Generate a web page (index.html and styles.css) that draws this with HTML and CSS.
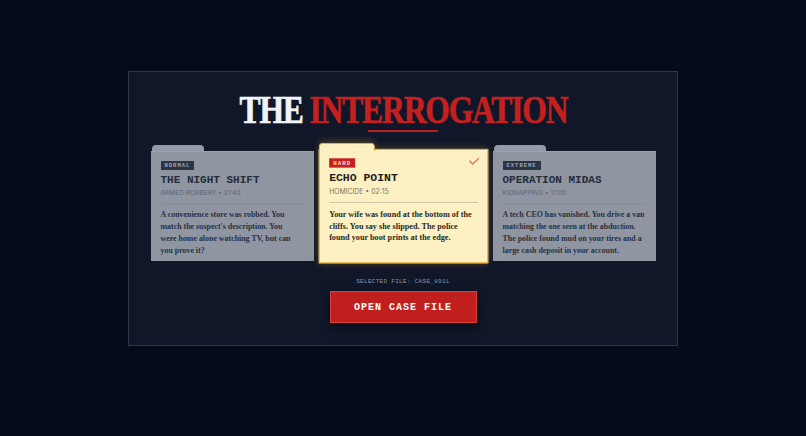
FILE: index.html
```html
<!DOCTYPE html>
<html lang="en">
<head>
    <meta charset="UTF-8">
    <meta name="viewport" content="width=device-width, initial-scale=1.0">
    <title>The Interrogation</title>
    <link rel="stylesheet" href="styles.css">
</head>
<body>

<div class="panel">
    <h1 class="title"><span class="title-inner"><span class="title-the">THE</span> <span class="title-main">INTERROGATION</span></span></h1>
    <div class="title-rule"></div>

    <div class="cases">
        <!-- Case 1 -->
        <div class="case">
            <div class="case-tab"></div>
            <div class="case-body">
                <span class="badge">NORMAL</span>
                <h3 class="case-name">THE NIGHT SHIFT</h3>
                <div class="case-meta">ARMED ROBBERY &bull; 21:40</div>
                <div class="case-rule"></div>
                <p class="case-desc">A convenience store was robbed. You<br>match the suspect's description. You<br>were home alone watching TV, but can<br>you prove it?</p>
            </div>
        </div>

        <!-- Case 2 (selected) -->
        <div class="case selected">
            <div class="case-tab"></div>
            <div class="case-body">
                <svg class="check" width="11" height="8" viewBox="0 0 11 8">
                    <polyline points="1,3.5 4,6.5 10,1" fill="none" stroke="#e0786a" stroke-width="1.4"/>
                </svg>
                <span class="badge badge-hard">HARD</span>
                <h3 class="case-name">ECHO POINT</h3>
                <div class="case-meta">HOMICIDE &bull; 02:15</div>
                <div class="case-rule"></div>
                <p class="case-desc">Your wife was found at the bottom of the<br>cliffs. You say she slipped. The police<br>found your boot prints at the edge.</p>
            </div>
        </div>

        <!-- Case 3 -->
        <div class="case">
            <div class="case-tab"></div>
            <div class="case-body">
                <span class="badge">EXTREME</span>
                <h3 class="case-name">OPERATION MIDAS</h3>
                <div class="case-meta">KIDNAPPING &bull; 11:00</div>
                <div class="case-rule"></div>
                <p class="case-desc">A tech CEO has vanished. You drive a van<br>matching the one seen at the abduction.<br>The police found mud on your tires and a<br>large cash deposit in your account.</p>
            </div>
        </div>
    </div>

    <div class="selected-file">SELECTED FILE: CASE_891L</div>
    <button type="button" class="open-btn">OPEN CASE FILE</button>
</div>

</body>
</html>
```

FILE: styles.css
```css
body {
    margin: 0;
    padding: 0;
    background-color: #060b19;
    height: 100vh;
    overflow: hidden;
}

.panel {
    width: 550px;
    height: 275px;
    box-sizing: border-box;
    margin: 71px auto 0;
    padding: 18px 21px 22px;
    background-color: #0f1729;
    border: 1px solid #2b374b;
    text-align: center;
}

.title {
    margin: 0;
    font-family: 'Liberation Serif', 'Times New Roman', serif;
    font-size: 40px;
    line-height: 40px;
    font-weight: bold;
    white-space: nowrap;
}

.title-inner {
    display: inline-block;
    letter-spacing: -1.5px;
    transform: scaleX(0.79);
    -webkit-text-stroke: 0.7px currentColor;
}

.title-the {
    color: #f1f3f8;
}

.title-main {
    color: #c4201f;
}

.title-rule {
    width: 70px;
    height: 2px;
    margin: 0 auto;
    background-color: #b81f1f;
}

.cases {
    display: flex;
    justify-content: center;
    gap: 8px;
    margin-top: 13px;
}

.case {
    width: 163px;
    text-align: left;
    position: relative;
}

.case-tab {
    width: 52px;
    height: 6px;
    margin-left: 1px;
    background-color: #949aa6;
    border-radius: 4px 4px 0 0;
}

.case-body {
    height: 110px;
    box-sizing: border-box;
    padding: 9px 10px;
    background-color: #8f95a1;
    border-top: 1px solid #9ba1ac;
    color: #252d3b;
    position: relative;
}

.badge {
    display: block;
    width: fit-content;
    padding: 2px 4px;
    background-color: #2c3546;
    color: #9ea6b4;
    font-family: 'Liberation Mono', 'Courier New', monospace;
    font-size: 5.5px;
    line-height: 5px;
    font-weight: bold;
    letter-spacing: 1px;
}

.case-name {
    margin: 4px 0 0;
    font-family: 'Liberation Mono', 'Courier New', monospace;
    font-size: 11px;
    line-height: 13px;
    font-weight: bold;
}

.case-meta {
    margin-top: 2px;
    font-family: Inter, 'Liberation Sans', sans-serif;
    font-size: 6.6px;
    line-height: 9px;
    color: #5e6676;
}

.case-rule {
    height: 1px;
    margin: 5px 0 5px;
    background-color: #868d9a;
}

.case-desc {
    margin: 0;
    font-family: 'Liberation Serif', 'Times New Roman', serif;
    font-size: 7.9px;
    line-height: 12px;
    font-weight: bold;
    white-space: nowrap;
    color: #2a3242;
}

/* selected folder */
.case.selected {
    transform: scale(1.04);
    z-index: 1;
}

.case.selected .case-tab {
    position: relative;
    z-index: 1;
    height: 7px;
    margin-left: 0;
    margin-bottom: -2px;
    background-color: #fdf1c4;
    border: 1.5px solid #eaa82a;
    border-bottom: none;
    border-radius: 4px 4px 0 0;
    box-shadow: 0 -2px 6px rgba(240, 176, 40, 0.25);
}

.case.selected .case-body {
    background-color: #fdf1c4;
    border: 1.5px solid #eaa82a;
    box-shadow: 0 0 8px rgba(240, 176, 40, 0.35);
    color: #1d1d1d;
    padding: 8px 9px;
}

.case.selected .badge-hard {
    background-color: #c4201f;
    color: #f8dbd2;
}

.case.selected .case-meta {
    color: #7b7465;
}

.case.selected .case-rule {
    background-color: #cfc6aa;
}

.case.selected .case-desc {
    line-height: 11.5px;
    color: #2b2a26;
}

.check {
    position: absolute;
    top: 7px;
    right: 7px;
}

.selected-file {
    margin-top: 17px;
    font-family: 'Liberation Mono', 'Courier New', monospace;
    font-size: 6px;
    line-height: 8px;
    letter-spacing: 0.3px;
    color: #8d95a4;
}

.open-btn {
    display: block;
    width: 147px;
    height: 32px;
    margin: 5px auto 0;
    padding: 0;
    background-color: #c11e1e;
    border: 1px solid #d8403a;
    color: #ffffff;
    font-family: 'Liberation Mono', 'Courier New', monospace;
    font-size: 10px;
    font-weight: bold;
    letter-spacing: 1px;
    box-shadow: 0 4px 10px rgba(0, 0, 0, 0.5);
    cursor: pointer;
}
```
